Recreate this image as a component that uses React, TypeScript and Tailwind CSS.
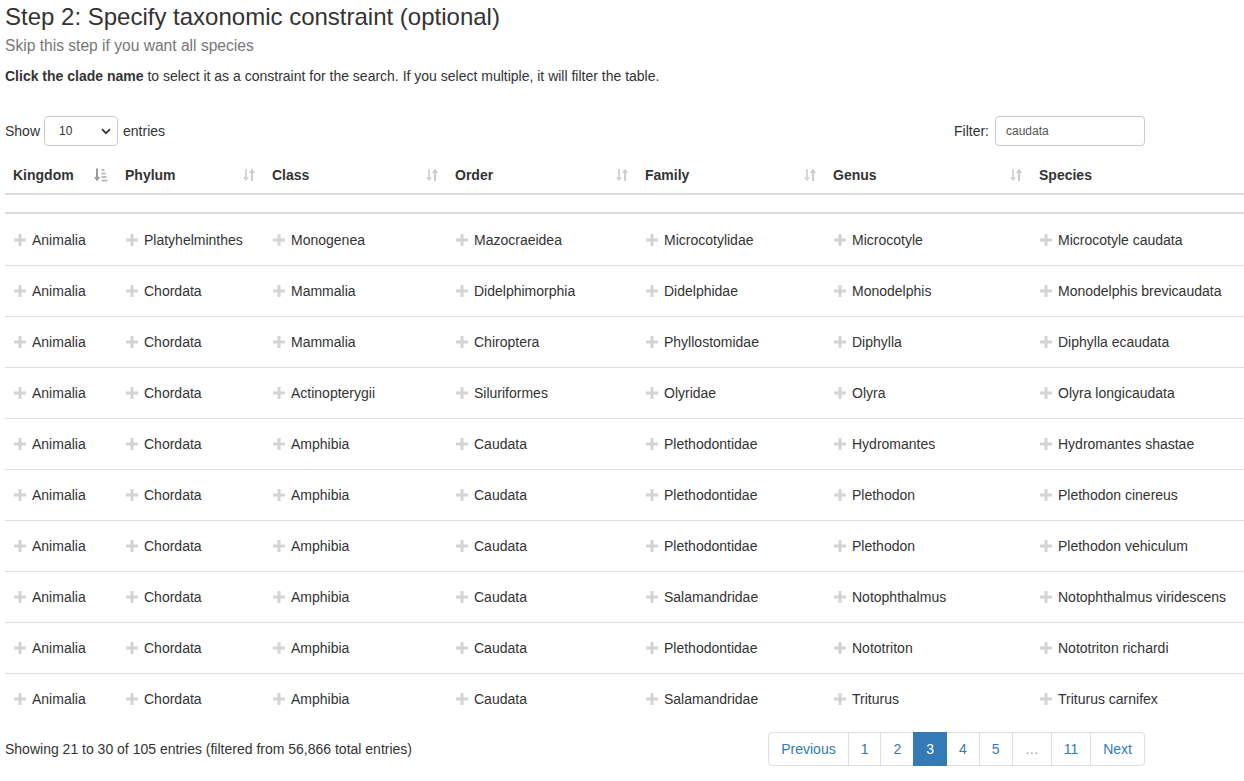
import React from "react";

const rows: string[][] = [
  ["Animalia", "Platyhelminthes", "Monogenea", "Mazocraeidea", "Microcotylidae", "Microcotyle", "Microcotyle caudata"],
  ["Animalia", "Chordata", "Mammalia", "Didelphimorphia", "Didelphidae", "Monodelphis", "Monodelphis brevicaudata"],
  ["Animalia", "Chordata", "Mammalia", "Chiroptera", "Phyllostomidae", "Diphylla", "Diphylla ecaudata"],
  ["Animalia", "Chordata", "Actinopterygii", "Siluriformes", "Olyridae", "Olyra", "Olyra longicaudata"],
  ["Animalia", "Chordata", "Amphibia", "Caudata", "Plethodontidae", "Hydromantes", "Hydromantes shastae"],
  ["Animalia", "Chordata", "Amphibia", "Caudata", "Plethodontidae", "Plethodon", "Plethodon cinereus"],
  ["Animalia", "Chordata", "Amphibia", "Caudata", "Plethodontidae", "Plethodon", "Plethodon vehiculum"],
  ["Animalia", "Chordata", "Amphibia", "Caudata", "Salamandridae", "Notophthalmus", "Notophthalmus viridescens"],
  ["Animalia", "Chordata", "Amphibia", "Caudata", "Plethodontidae", "Nototriton", "Nototriton richardi"],
  ["Animalia", "Chordata", "Amphibia", "Caudata", "Salamandridae", "Triturus", "Triturus carnifex"],
];

const headers = ["Kingdom", "Phylum", "Class", "Order", "Family", "Genus", "Species"];

const gridCols = "grid grid-cols-[112px_147px_183px_190px_188px_206px_213px]";

function Plus() {
  return (
    <svg width="12" height="12" viewBox="0 0 12 12" className="shrink-0">
      <rect x="4.5" y="0" width="3" height="12" fill="#d4d4d4" />
      <rect x="0" y="4.5" width="12" height="3" fill="#d4d4d4" />
    </svg>
  );
}

function SortBoth() {
  return (
    <svg width="12" height="16" viewBox="0 0 12 16" className="shrink-0">
      <rect x="2" y="2" width="2" height="9" fill="#d6d6d6" />
      <path d="M0 10 L6 10 L3 14.5 Z" fill="#d6d6d6" />
      <rect x="8" y="5" width="2" height="9" fill="#cccccc" />
      <path d="M6 6 L12 6 L9 1.5 Z" fill="#cccccc" />
    </svg>
  );
}

function SortAsc() {
  return (
    <svg width="14" height="16" viewBox="0 0 14 16" className="shrink-0">
      <rect x="2" y="1.5" width="2" height="9.5" fill="#9a9a9a" />
      <path d="M0 10 L6 10 L3 14.5 Z" fill="#9a9a9a" />
      <rect x="7.5" y="2" width="3" height="2" fill="#bdbdbd" />
      <rect x="7.5" y="5.5" width="4" height="2" fill="#bdbdbd" />
      <rect x="7.5" y="9" width="5" height="2" fill="#bdbdbd" />
      <rect x="7.5" y="12.5" width="6" height="2" fill="#bdbdbd" />
    </svg>
  );
}

function Chevron() {
  return (
    <svg width="10" height="7" viewBox="0 0 10 7">
      <path d="M1 1.2 L5 5.2 L9 1.2" stroke="#333" strokeWidth="1.7" fill="none" />
    </svg>
  );
}

export default function App() {
  const pages = ["Previous", "1", "2", "3", "4", "5", "…", "11", "Next"];
  return (
    <div
      className="bg-white text-[#333] text-[14px] leading-[20px] pl-[5px] w-[1244px] overflow-hidden min-h-[781px]"
      style={{ fontFamily: '"Liberation Sans", Arial, Helvetica, sans-serif' }}
    >
      <h3 className="text-[24px] leading-[26px] mt-[4px] font-normal">
        Step 2: Specify taxonomic constraint (optional)
      </h3>
      <div className="text-[15.6px] leading-[18px] text-[#777] mt-[7px]">Skip this step if you want all species</div>
      <p className="text-[14px] leading-[20px] mt-[11px]">
        <b>Click the clade name</b> to select it as a constraint for the search. If you select multiple, it will filter the table.
      </p>

      <div className="w-[1140px] flex justify-between items-center mt-[30px] h-[30px]">
        <div className="flex items-center">
          <span>Show</span>
          <div className="ml-[4px] w-[74px] h-[30px] border border-[#ccc] rounded-[4px] flex items-center justify-between pl-[14px] pr-[6px] text-[12px]">
            <span>10</span>
            <Chevron />
          </div>
          <span className="ml-[5px]">entries</span>
        </div>
        <div className="flex items-center">
          <span>Filter:</span>
          <div className="ml-[6px] w-[150px] h-[30px] border border-[#ccc] rounded-[4px] flex items-center pl-[10px] text-[12px] text-[#555]">
            caudata
          </div>
        </div>
      </div>

      <div className="w-[1239px] mt-[11px]">
        <div className={`${gridCols} h-[38px] border-b-2 border-[#ddd]`}>
          {headers.map((h, i) => (
            <div key={h} className="flex items-center justify-between pl-[8px] pr-[9px] font-bold">
              <span>{h}</span>
              {i === 0 ? <SortAsc /> : i < 6 ? <SortBoth /> : null}
            </div>
          ))}
        </div>
        <div className="h-[19px] border-b-2 border-[#ddd]" />
        {rows.map((r, ri) => (
          <div key={ri} className={`${gridCols} h-[51px] ${ri > 0 ? "border-t border-[#ddd]" : ""}`}>
            {r.map((c, ci) => (
              <div key={ci} className="flex items-center pl-[9px] gap-[6px] whitespace-nowrap">
                <Plus />
                <span>{c}</span>
              </div>
            ))}
          </div>
        ))}
      </div>

      <div className="w-[1140px] flex justify-between items-center mt-[8px]">
        <div>Showing 21 to 30 of 105 entries (filtered from 56,866 total entries)</div>
        <div className="flex">
          {pages.map((p, i) => {
            const active = p === "3";
            const ell = p === "…";
            return (
              <div
                key={i}
                className={`h-[34px] px-[12px] flex items-center border ${i > 0 ? "-ml-px" : ""} ${
                  i === 0 ? "rounded-l-[4px]" : ""
                } ${i === pages.length - 1 ? "rounded-r-[4px]" : ""} ${
                  active
                    ? "bg-[#337ab7] border-[#337ab7] text-white relative"
                    : ell
                    ? "border-[#ddd] text-[#999]"
                    : "border-[#ddd] text-[#337ab7]"
                }`}
              >
                {p}
              </div>
            );
          })}
        </div>
      </div>
    </div>
  );
}
